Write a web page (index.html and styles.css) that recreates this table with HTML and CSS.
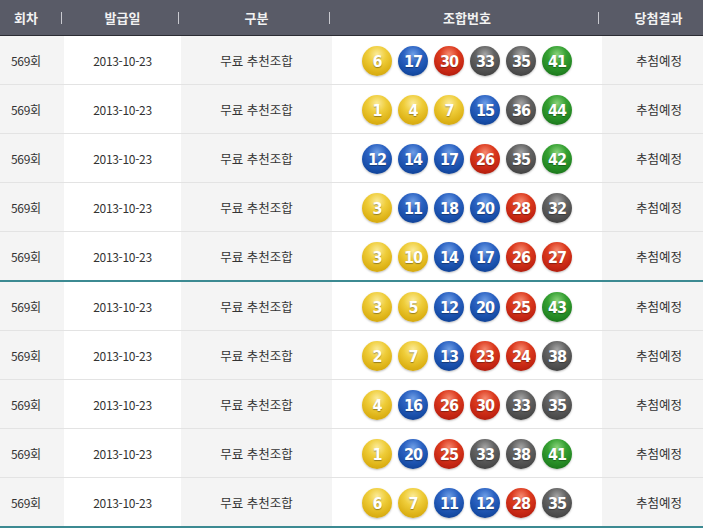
FILE: index.html
```html
<!DOCTYPE html>
<html lang="ko">
<head>
<meta charset="utf-8">
<title>추천조합</title>
<link rel="stylesheet" href="styles.css">
</head>
<body>
<table class="list">
  <colgroup>
    <col class="c1"><col class="c2"><col class="c3"><col class="c4"><col class="c5">
  </colgroup>
  <thead>
    <tr>
      <th class="h1">회차</th>
      <th class="h2">발급일</th>
      <th class="h3">구분</th>
      <th class="h4">조합번호</th>
      <th class="h5">당첨결과</th>
    </tr>
  </thead>
  <tbody>
    <tr>
      <td class="round">569회</td><td class="date">2013-10-23</td><td class="kind">무료 추천조합</td>
      <td class="nums"><div class="balls"><span class="ball y">6</span><span class="ball b">17</span><span class="ball r">30</span><span class="ball g">33</span><span class="ball g">35</span><span class="ball gr">41</span></div></td>
      <td class="result">추첨예정</td>
    </tr>
    <tr>
      <td class="round">569회</td><td class="date">2013-10-23</td><td class="kind">무료 추천조합</td>
      <td class="nums"><div class="balls"><span class="ball y">1</span><span class="ball y">4</span><span class="ball y">7</span><span class="ball b">15</span><span class="ball g">36</span><span class="ball gr">44</span></div></td>
      <td class="result">추첨예정</td>
    </tr>
    <tr>
      <td class="round">569회</td><td class="date">2013-10-23</td><td class="kind">무료 추천조합</td>
      <td class="nums"><div class="balls"><span class="ball b">12</span><span class="ball b">14</span><span class="ball b">17</span><span class="ball r">26</span><span class="ball g">35</span><span class="ball gr">42</span></div></td>
      <td class="result">추첨예정</td>
    </tr>
    <tr>
      <td class="round">569회</td><td class="date">2013-10-23</td><td class="kind">무료 추천조합</td>
      <td class="nums"><div class="balls"><span class="ball y">3</span><span class="ball b">11</span><span class="ball b">18</span><span class="ball b">20</span><span class="ball r">28</span><span class="ball g">32</span></div></td>
      <td class="result">추첨예정</td>
    </tr>
    <tr class="group-end">
      <td class="round">569회</td><td class="date">2013-10-23</td><td class="kind">무료 추천조합</td>
      <td class="nums"><div class="balls"><span class="ball y">3</span><span class="ball y">10</span><span class="ball b">14</span><span class="ball b">17</span><span class="ball r">26</span><span class="ball r">27</span></div></td>
      <td class="result">추첨예정</td>
    </tr>
    <tr>
      <td class="round">569회</td><td class="date">2013-10-23</td><td class="kind">무료 추천조합</td>
      <td class="nums"><div class="balls"><span class="ball y">3</span><span class="ball y">5</span><span class="ball b">12</span><span class="ball b">20</span><span class="ball r">25</span><span class="ball gr">43</span></div></td>
      <td class="result">추첨예정</td>
    </tr>
    <tr>
      <td class="round">569회</td><td class="date">2013-10-23</td><td class="kind">무료 추천조합</td>
      <td class="nums"><div class="balls"><span class="ball y">2</span><span class="ball y">7</span><span class="ball b">13</span><span class="ball r">23</span><span class="ball r">24</span><span class="ball g">38</span></div></td>
      <td class="result">추첨예정</td>
    </tr>
    <tr>
      <td class="round">569회</td><td class="date">2013-10-23</td><td class="kind">무료 추천조합</td>
      <td class="nums"><div class="balls"><span class="ball y">4</span><span class="ball b">16</span><span class="ball r">26</span><span class="ball r">30</span><span class="ball g">33</span><span class="ball g">35</span></div></td>
      <td class="result">추첨예정</td>
    </tr>
    <tr>
      <td class="round">569회</td><td class="date">2013-10-23</td><td class="kind">무료 추천조합</td>
      <td class="nums"><div class="balls"><span class="ball y">1</span><span class="ball b">20</span><span class="ball r">25</span><span class="ball g">33</span><span class="ball g">38</span><span class="ball gr">41</span></div></td>
      <td class="result">추첨예정</td>
    </tr>
    <tr class="group-end">
      <td class="round">569회</td><td class="date">2013-10-23</td><td class="kind">무료 추천조합</td>
      <td class="nums"><div class="balls"><span class="ball y">6</span><span class="ball y">7</span><span class="ball b">11</span><span class="ball b">12</span><span class="ball r">28</span><span class="ball g">35</span></div></td>
      <td class="result">추첨예정</td>
    </tr>
  </tbody>
</table>
</body>
</html>
```

FILE: styles.css
```css
html, body {
  margin: 0;
  padding: 0;
  background: #fff;
}
body {
  font-family: "Noto Sans CJK KR", "DejaVu Sans", sans-serif;
  font-size: 12px;
  color: #333;
}
.list {
  width: 703px;
  border-collapse: collapse;
  table-layout: fixed;
}
.c1 { width: 64px; }
.c2 { width: 117px; }
.c3 { width: 151px; }
.c4 { width: 270px; }
.c5 { width: 101px; }

.list th {
  position: relative;
  height: 35px;
  padding: 0;
  background: #595b67;
  border-bottom: 1px solid #2b2c33;
  color: #f2f2f2;
  font-size: 13px;
  font-weight: bold;
  text-align: center;
}
.list th::after {
  content: "";
  position: absolute;
  top: 12px;
  right: 2px;
  width: 1px;
  height: 12px;
  background: #c9cad0;
}
.list th.h5::after { display: none; }
.list th.h1 { text-align: left; padding-left: 14px; }
.list th.h4::after { right: 3px; }
.list th.h5 { padding-left: 12px; }

.list td {
  height: 48px;
  padding: 0;
  border-bottom: 1px solid #e3e3e3;
  text-align: center;
  vertical-align: middle;
}
.list td.round, .list td.date {
  letter-spacing: -0.3px;
}
.list td.kind, .list td.result {
  font-size: 12.5px;
}
.list tr.group-end td {
  border-bottom: 2px solid #3c8a92;
}
.round, .kind, .result {
  background: #f4f4f4;
}
.list td.round { text-align: left; padding-left: 11px; }
.list td.result { padding-left: 13px; }

.balls {
  display: flex;
  justify-content: center;
  gap: 6px;
  padding-top: 2px;
}
.ball {
  width: 30px;
  height: 30px;
  border-radius: 50%;
  display: flex;
  align-items: center;
  justify-content: center;
  color: #fff;
  font-family: "DejaVu Sans Condensed", "DejaVu Sans", sans-serif;
  font-weight: bold;
  font-size: 16px;
  letter-spacing: -1px;
  text-shadow: 0 1px 1px rgba(0,0,0,0.35);
  box-shadow: 0 1px 2px rgba(0,0,0,0.25);
}
.ball.y {
  background: radial-gradient(circle at 50% 28%, #fbeb9a 0%, #efcd3a 35%, #ddb216 70%, #c79b0c 100%);
}
.ball.b {
  background: radial-gradient(circle at 50% 28%, #6f9fe6 0%, #2b62c2 35%, #164ca6 70%, #0c3580 100%);
}
.ball.r {
  background: radial-gradient(circle at 50% 28%, #f58a70 0%, #dc3a1e 35%, #c22412 70%, #961608 100%);
}
.ball.g {
  background: radial-gradient(circle at 50% 28%, #a5a5a5 0%, #636363 35%, #4c4c4c 70%, #333 100%);
}
.ball.gr {
  background: radial-gradient(circle at 50% 28%, #88d27a 0%, #35a032 35%, #228522 70%, #136013 100%);
}
```
